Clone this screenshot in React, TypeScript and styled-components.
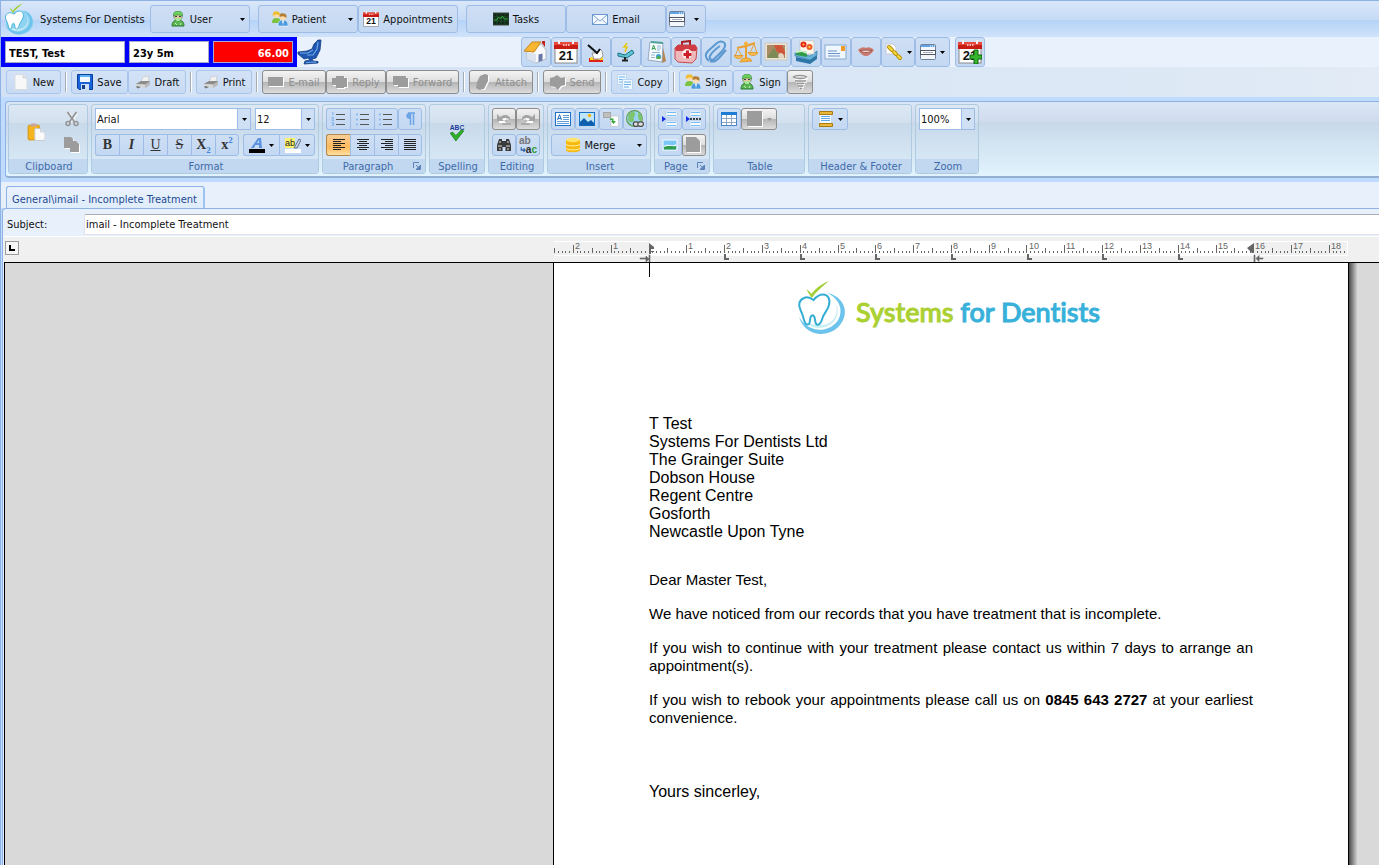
import React from "react";
import styled, { createGlobalStyle, css } from "styled-components";

const UI_FONT = '"DejaVu Sans Condensed", "Noto Sans", sans-serif';
const DOC_FONT = '"Liberation Sans", Arial, sans-serif';

const Global = createGlobalStyle`
  *, *::before, *::after { box-sizing: border-box; }
  html, body { margin: 0; height: 100%; }
  body { background: #d9d9d9; font: 11px/15px ${UI_FONT}; color: #111; overflow: hidden; }
  #root { height: 100%; }
  button, input, select { font: inherit; color: inherit; margin: 0; }
`;

/* ---------- Icons ---------- */

type IconProps = { size?: number; box?: number; children?: React.ReactNode };
const Svg = ({ size = 16, box = 16, children }: IconProps) => (
  <svg width={size} height={size} viewBox={`0 0 ${box} ${box}`} aria-hidden="true">
    {children}
  </svg>
);

const ToothMark = ({ size, solid }: { size: number; solid?: boolean }) => (
  <svg width={size} height={size} viewBox="0 0 50 54" aria-hidden="true">
    {solid && <ellipse cx="26" cy="33" rx="23" ry="20" fill="#8fd2f2" />}
    <path d="M30 12C42 14 50 24 47.500 35C44 48 33 53 23 53C13 52.500 5 46 2 36C8 46 18 50 27 48.500C38 46 44 38 43.500 29C43 21 37 15 30 12Z" fill="#6cc4ec" />
    <path d="M37 19C42 26 40 38 32 42C24 46 13 44 7 39C12 48 24 49 33 44C42 38 43 27 37 19Z" fill="#cdeff2" />
    <path
      d="M16.500 19C14 17 10 15.500 7 17C2 19 1 24 3.500 29C5 32 6 35 7 39C8 43 10 44.500 12 43C14 40 12 34.500 15.700 34.300C19 34.500 17 41 19.500 43.500C22 45 24.500 41 25.500 37C27 32 31 29 32 24C33.500 18 31 13.500 26 13.500C22 13.500 19 16 16.500 19Z"
      fill="#fff"
      stroke="#35aed6"
      strokeWidth={solid ? 1.5 : 2}
    />
    <path d="M9.500 8C12 10 13.500 11.500 14.500 13C18 8 24 3 31.500 .3C25 6 19 11 14.800 17C13 14 11 12 9.500 8Z" fill="#a3cf3a" />
  </svg>
);

const DoctorIcon = () => (
  <Svg>
    <path d="M2 15C2 11 4 9 8 9S14 11 14 15Z" fill="#5bb552" stroke="#2b7a2e" />
    <circle cx="8" cy="5.500" r="4.200" fill="#e9c39a" stroke="#3c7b3a" strokeWidth=".6" />
    <path d="M3.500 5C3 1 6 0 8 0S13 1 12.500 5C10 3.500 6 3.500 3.500 5Z" fill="#6fcf5e" stroke="#2c8030" strokeWidth=".6" />
    <path d="M5 5h2v1H5ZM9 5h2v1H9Z" fill="#345" />
    <path d="M4.500 7h7L9.500 10h-3Z" fill="#a6e898" />
    <path d="M5 12l2 2M11 12l-1 2" stroke="#c9f4ba" />
  </Svg>
);

const PeopleIcon = () => (
  <Svg>
    <path d="M0 12C0 8 2 7 4.500 7S9 8 9 12Z" fill="#7cc242" />
    <circle cx="4.500" cy="4.500" r="2.800" fill="#fbdcb0" />
    <path d="M1 5C0 1 3 0 4.500 .5C7 0 8.500 2 7.800 5C6 3 3 3 1 5Z" fill="#f0bd2a" />
    <path d="M6 15C6 10 8 9 11 9S16 10 16 15Z" fill="#4b9be0" stroke="#fff" strokeWidth=".5" />
    <circle cx="11" cy="6.500" r="3" fill="#fbdcb0" />
    <path d="M7.800 6C7 2 10 2 11 2.500C14 2 15 4 14.300 7C12 5 10 5 7.800 6Z" fill="#b57d31" />
    <path d="M10 9.500L11 14L12 9.500Z" fill="#fff" />
  </Svg>
);

const CalendarIcon = ({ size = 16, plus }: { size?: number; plus?: boolean }) => (
  <Svg size={size} box={24}>
    <rect x="1" y="3" width="22" height="20" fill="#fff" stroke="#8a8a8a" />
    <rect x="0" y="2" width="24" height="4" fill="#e8493c" />
    <rect x="0" y="5" width="24" height="4" fill="#c81d14" />
    <path d="M5 0v4M19 0v4" stroke="#f0f0f0" strokeWidth="2" />
    <path d="M9 5h1.500M11.500 5h1.500M14 5h1.500" stroke="#ffb9b2" strokeWidth="2" />
    <text x="12" y="20" fontSize="13" fontWeight="700" fontFamily="Liberation Sans" textAnchor="middle" fill="#111">
      21
    </text>
    {plus && <path d="M16 10h4v5h4v4h-4v5h-4v-5h-4v-4h4Z" fill="#35b52b" stroke="#116315" />}
  </Svg>
);

const TasksIcon = () => (
  <Svg>
    <rect x="0" y="2" width="16" height="12" fill="#15261a" stroke="#3a4a3c" />
    <path d="M1 6h14M1 10h14M4 3v10M8 3v10M12 3v10" stroke="#1d5a2c" strokeWidth=".7" />
    <path d="M1 9h3l1.500-3 2 2 2-3 1.500 3h4" fill="none" stroke="#2fa83a" />
  </Svg>
);

const MailIcon = () => (
  <Svg>
    <rect x=".5" y="3.500" width="15" height="10" fill="#f4f9ff" stroke="#6d97cf" />
    <path d="M1 4l7 6 7-6M1 13l5-4.500M15 13l-5-4.500" fill="none" stroke="#7fa6d8" />
  </Svg>
);

const WindowIcon = () => (
  <Svg>
    <rect x=".5" y=".5" width="15" height="15" rx="1" fill="#f3f7fc" stroke="#6f8099" />
    <rect x="1" y="1" width="14" height="2" fill="#5fa4e8" />
    <path d="M10 2h1M12 2h1M14 2h1" stroke="#fff" />
    <rect x=".5" y="6.500" width="15" height="4" fill="#fff" stroke="#4d5566" />
    <path d="M3 8.500h10" stroke="#a2aaba" />
  </Svg>
);

const ChairIcon = () => (
  <Svg size={26} box={26}>
    <path d="M17 5L21 1H24L23 11 19 19 15 20 16 22 21 22.500V24L7 25 8 22 13 21 11 19 7 20 1 15V13L10 12 15 10Z" fill="#1f57b0" stroke="#123b7c" strokeWidth=".8" />
    <path d="M21 3l-1 7-4 6-6 0M3 14l8 0 5-3M9 23.500l10-.5" stroke="#6fa6e8" fill="none" strokeWidth="1.200" />
  </Svg>
);

const HomeIcon = () => (
  <Svg size={24} box={24}>
    <path d="M18 1h3v9h-3Z" fill="#c3221c" />
    <path d="M3 11v8l9 4 10-4v-9l-5-6Z" fill="#f8fafc" stroke="#a2aebd" strokeWidth=".8" />
    <path d="M3 12l9 2v9l-9-4Z" fill="#dbe3ee" />
    <path d="M8 2h9L10 12 0 11Z" fill="#f7b733" stroke="#c9861c" />
    <path d="M17 3l6 8" stroke="#c9ced6" strokeWidth="1.500" />
    <path d="M14.500 14.500l4-1v7l-4 1.500Z" fill="#6a76a8" />
  </Svg>
);

const ProbeIcon = () => (
  <Svg size={24} box={24}>
    <path d="M5 18h14v4H5Z" fill="#e02216" />
    <path d="M6 18c2-2 3-1 3 1 3 1 5 1 6 0 0-3 2-3 4-1v2H6Z" fill="#ffd71a" />
    <path d="M8 13l4 0 4-4 2 2 1 5-3 3h-6Z" fill="#fff" stroke="#999" />
    <path d="M4 5l9 8 3-4" fill="none" stroke="#111" strokeWidth="2" />
  </Svg>
);

const ScalerIcon = () => (
  <Svg size={24} box={24}>
    <path d="M13 3l-3 4h3l-2 5" stroke="#e9c60c" strokeWidth="1.500" fill="none" />
    <path d="M4 13l7 2 7-5 2 3-7 5-9-2Z" fill="#5cc7d4" stroke="#1c6f86" />
    <path d="M11 17v3M8 20.500h6" stroke="#222" strokeWidth="2" />
  </Svg>
);

const NotesIcon = () => (
  <Svg size={24} box={24}>
    <path d="M18 3l4 18-4 2Z" fill="#b9834c" />
    <path d="M6 2l13 1-1 19-14-2Z" fill="#f7fbff" stroke="#94a8c0" />
    <path d="M7 1l12 1v2L7 3Z" fill="#4f9f9a" />
    <path d="M8 10l1.500-5L11.500 10M8 8.500h3" stroke="#36a04a" fill="none" />
    <path d="M8 12.500h8M7 15h4M7 17.500h4M13 6h4M13 8h4M13 10h3" stroke="#8fb8d6" />
    <circle cx="14.500" cy="16.500" r="2.500" fill="#3f9fd4" />
    <path d="M12.500 17.500c1-2 3-2 4 0v1.500h-4Z" fill="#4fb04a" />
  </Svg>
);

const FirstAidIcon = () => (
  <Svg size={24} box={24}>
    <path d="M8 6V2l8-1v4" fill="none" stroke="#a61c22" strokeWidth="2" />
    <path d="M1 8l3-3h17l2 3-1 11-4 4-14-1-3-3Z" fill="#f0b9b9" stroke="#c24a50" />
    <path d="M1 8l3-3h17l2 3-1 3H2Z" fill="#cf3c43" />
    <circle cx="13" cy="14" r="5" fill="#fdeeee" />
    <path d="M12 10.500h3v2.500h2.500v3H15v2.500h-3V16H9.500v-3H12Z" fill="#cf1e25" />
  </Svg>
);

const ClipIcon = () => (
  <Svg size={24} box={24}>
    <path
      d="M5 21C1 18 1 14 4 11L13 3c4-3 9-1 8 3-1 5-7 9-11 13-3 2-5 0-4-3 2-4 7-8 10-10M6 21c4 2 7-1 9-3l7-8"
      fill="none"
      stroke="#5b98cf"
      strokeWidth="2"
    />
    <path d="M5 14l9-9c3-3 6-1 5 1" fill="none" stroke="#b7d9f3" />
  </Svg>
);

const ScalesIcon = () => (
  <Svg size={24} box={24}>
    <path d="M12 2v17M3 8l9-2 9-3" fill="none" stroke="#eaa02c" strokeWidth="2" />
    <path d="M6 22c1-3 3-4 6-4s5 1 6 3Z" fill="#f5b544" stroke="#dd8f1c" strokeWidth=".8" />
    <path d="M4 9L1 16M4 9l4 7M20 4l-4 9M20 4l3 9" stroke="#e6a33c" fill="none" />
    <path d="M0 15.500h9c-1 4-8 4-9 0ZM14 12.500h10c-1 4-9 4-10 0Z" fill="#f8bc4e" stroke="#d98b1b" strokeWidth=".7" />
    <circle cx="12" cy="3.500" r="2" fill="#f5b33b" />
  </Svg>
);

const PhotoIcon = () => (
  <Svg size={24} box={24}>
    <rect x="1" y="3" width="22" height="17" fill="#e9e4d8" stroke="#cfcabc" />
    <rect x="3" y="5" width="18" height="13" fill="#a88a63" />
    <path d="M10 5h8l3 7v3l-8-3Z" fill="#cf5638" />
    <path d="M4 16l6-8 5 8v2H4Z" fill="#7d8a55" />
    <path d="M14 16c1-4 5-4 6 0v2h-5Z" fill="#e3d3c2" />
  </Svg>
);

const AlbumIcon = () => (
  <Svg size={24} box={24}>
    <path d="M2 17l14 3 7-5v4l-7 5-14-3Z" fill="#2c77a8" />
    <path d="M1 13l15 3 7-5v4l-7 5-15-4Z" fill="#67b4dc" stroke="#276b99" strokeWidth=".6" />
    <path d="M6 0l14 1v13H6Z" fill="#fff8ec" stroke="#bbb" strokeWidth=".6" />
    <circle cx="9.500" cy="4.500" r="3" fill="#e3271d" />
    <circle cx="15.500" cy="7" r="3" fill="#ef5d2a" />
    <circle cx="9.500" cy="4.500" r="1" fill="#ffd83c" />
    <circle cx="15.500" cy="7" r="1" fill="#ffd83c" />
    <path d="M2 10l11 1v5L2 14Z" fill="#c9ecc6" />
    <path d="M2 13l6-1 5 2v3L2 15Z" fill="#2f9a48" />
  </Svg>
);

const PostcardIcon = () => (
  <Svg size={24} box={24}>
    <rect x="1" y="5" width="21" height="14" fill="#eef7ff" stroke="#88a9d0" />
    <path d="M4 11h9M4 13.500h12M4 16h12" stroke="#6c8fc4" />
    <rect x="17" y="6" width="4" height="5" fill="#f09a2c" />
  </Svg>
);

const LipsIcon = () => (
  <Svg size={18} box={18}>
    <path d="M1 7C4 4 7 3.500 9 5C11 3.500 14 4 17 7C14 11 12 13 9 13S4 11 1 7Z" fill="#cc7a70" />
    <path d="M3 7.500c4-.5 8-.5 12 0-3 2-4 2-6 2S6 9.500 3 7.500Z" fill="#f3d9d6" stroke="#8f4a44" strokeWidth=".8" />
  </Svg>
);

const LinkIcon = () => (
  <Svg size={18} box={18}>
    <path d="M1 1h7l3 3v7H1Z" fill="#fbfcfe" stroke="#c9c9d6" />
    <g fill="none" stroke="#b8900c" strokeWidth="4" strokeLinecap="round">
      <path d="M4 4l3 3M9 9l2 2M13 13l2 2" />
    </g>
    <g fill="none" stroke="#f8dc3a" strokeWidth="2" strokeLinecap="round">
      <path d="M4 4l3 3M9 9l2 2M13 13l2 2" />
    </g>
  </Svg>
);

const PageIcon = () => (
  <Svg>
    <path d="M2 .5h8L14 4v11.500H2Z" fill="#f8f8f8" stroke="#d8dbe0" />
    <path d="M10 .5V4h4" fill="#e2e4e8" stroke="#d0d3d8" />
  </Svg>
);

const SaveIcon = () => (
  <Svg>
    <path d="M.5 .5h15v15H2l-1.500-1.500Z" fill="#1a63d8" stroke="#0c3f9b" />
    <path d="M3 1h10v7H3Z" fill="#f2f8ff" />
    <path d="M3 1h10v2H3Z" fill="#5cb6f2" />
    <path d="M4 10h8v6H4Z" fill="#cfe0f4" />
    <path d="M5 11h3v4H5Z" fill="#163d86" />
  </Svg>
);

const PrinterIcon = () => (
  <Svg>
    <path d="M8 3l6-1-1 6H6Z" fill="#f2f2f2" stroke="#c2c2c2" strokeWidth=".6" />
    <path d="M1 10l5-3h9v4l-5 3Z" fill="#b8b8b8" />
    <path d="M1 10l5-3h9l-5 3.500Z" fill="#8b8b8b" />
    <path d="M1 10l9 .5V14L1 12Z" fill="#d6d6d6" />
    <path d="M2 12l4 1-3 1.500-2-1.500Z" fill="#777" />
  </Svg>
);

const GreyShape = ({ d }: { d: string }) => (
  <Svg>
    <path d={d} transform="translate(1 1)" fill="#fff" />
    <path d={d} fill="#9c9c9c" />
  </Svg>
);

const CopyIcon = () => (
  <Svg>
    <path d="M.5 .5h9v10h-9Z" fill="#eff7fe" stroke="#b7d6f1" />
    <path d="M2 3h6M2 5.500h6M2 8h4" stroke="#6fb1ea" />
    <path d="M5.500 5.500h10v10h-10Z" fill="#eff7fe" stroke="#b7d6f1" />
    <path d="M7 8h7M7 10.500h7M7 13h5" stroke="#6fb1ea" />
  </Svg>
);

const TornadoIcon = () => (
  <Svg>
    <path d="M1 3c3-2 11-2 14 0M1 3c3 3 11 3 14 0M3 7h11M5 9.500h7M6 12h5M8 14.500h2" stroke="#fff" strokeWidth="1.500" fill="none" transform="translate(1 1)" />
    <path d="M1 3c3-2 11-2 14 0M1 3c3 2 11 2 14 0M3 7h11M5 9.500h7M6 12h5M8 14.500h2" stroke="#969696" strokeWidth="1.500" fill="none" />
  </Svg>
);

const PasteIcon = () => (
  <Svg size={18}>
    <rect x="1" y="2" width="10" height="13" rx="1" fill="#f5b51f" stroke="#d48c08" strokeWidth=".8" />
    <path d="M3 3C3 1 4 .5 6 .5S9 1 9 3Z" fill="#cda49c" />
    <path d="M7 5h5l4 3v7.500H7Z" fill="#fafafa" stroke="#c4cad2" strokeWidth=".8" />
    <path d="M12 5v3h4" fill="#dfe3e8" stroke="#c4cad2" strokeWidth=".6" />
  </Svg>
);

const CutIcon = () => (
  <Svg>
    <path d="M4 1l6 9M12 1L6 10" stroke="#fff" strokeWidth="2" transform="translate(1 1)" />
    <path d="M3.500 1l7 10M12.500 1l-7 10" stroke="#949494" strokeWidth="1.800" />
    <circle cx="4" cy="12.500" r="2" fill="none" stroke="#949494" strokeWidth="1.500" />
    <circle cx="12" cy="12.500" r="2" fill="none" stroke="#949494" strokeWidth="1.500" />
  </Svg>
);

const ListIcon = ({ numbered }: { numbered?: boolean }) => (
  <Svg>
    <path d="M5 3.500h9M5 8.500h9M5 13.500h9" stroke="#555" />
    {numbered ? (
      <path d="M1 1.500h1v3M.5 6.500h2v1.500h-1.500v1.500h2M.5 11.500h2v3h-2M1 13h1.500" fill="none" stroke="#7fb0ea" strokeWidth=".9" />
    ) : (
      <path d="M1 2.500h2v2H1ZM1 7.500h2v2H1ZM1 12.500h2v2H1Z" fill="#8fbcf0" />
    )}
  </Svg>
);

const AlignIcon = ({ kind }: { kind: "left" | "center" | "right" | "full" }) => {
  const short = { left: "M2 4.500h8", center: "M4 4.500h8", right: "M6 4.500h8", full: "M2 4.500h12" }[kind];
  const low = short.replace("4.500", "8.500");
  const last = short.replace("4.500", "12.500");
  return (
    <Svg>
      <path d={`M2 2.500h12M2 6.500h12M2 10.500h12${short}${low}${last}`} stroke="#222" />
    </Svg>
  );
};

const PilcrowIcon = () => (
  <Svg>
    <path d="M6 2h7M8.500 2v12M11.500 2v12" stroke="#6da4e6" strokeWidth="1.500" />
    <path d="M8 2C3 1 3 8 8 8Z" fill="#6da4e6" />
  </Svg>
);

const SpellIcon = () => (
  <Svg size={18}>
    <text x="8" y="6" fontSize="6" fontWeight="700" fontFamily="Liberation Sans" textAnchor="middle" fill="#1f3d9b">
      ABC
    </text>
    <path d="M2 9l2-1 3 3 5-5 2 1-7 9Z" fill="#2fae2a" stroke="#14761a" strokeWidth=".6" />
  </Svg>
);

const ArrowBack = ({ flip }: { flip?: boolean }) => (
  <Svg>
    <g transform={flip ? "translate(16 0) scale(-1 1)" : undefined}>
      <path d="M2 4v7h7L7 8.500c3-2 5-1 6 1 1-4-4-7-8-3Z" fill="#fff" transform="translate(1 1)" />
      <path d="M1 3v7h7L6 8c3-2 6-1 8 2 1-6-5-8-10-4Z" fill="#a3a3a3" />
      <path d="M6 13h9" stroke="#a3a3a3" strokeWidth="1.500" />
    </g>
  </Svg>
);

const BinocularsIcon = () => (
  <Svg>
    <path d="M3 2h3v2h4V2h3l2 6v6H9.500v-4h-3v4H1V8Z" fill="#3b3b3b" />
    <path d="M2 9h4M10 9h4M3 5h2M11 5h2M3 12h2M11 12h2" stroke="#e2e2e2" strokeWidth="1.200" />
  </Svg>
);

const ReplaceIcon = () => (
  <Svg size={18} box={16}>
    <text x="0" y="7" fontSize="9" fontWeight="700" fontFamily="Liberation Sans" fill="#777">
      ab
    </text>
    <text x="6" y="15" fontSize="9" fontWeight="700" fontFamily="Liberation Sans" fill="#2b2b2b">
      a<tspan fill="#2c9e36">c</tspan>
    </text>
    <path d="M2 10v2.500h3M4 11l1.500 1.500L4 14" fill="none" stroke="#2b5f9e" />
  </Svg>
);

const TextBoxIcon = () => (
  <Svg>
    <rect x=".5" y="1.500" width="15" height="13" fill="#fff" stroke="#1f6fc4" />
    <path d="M2.500 9l2-5.500L6.500 9M3 7.500h3" fill="none" stroke="#1f6fc4" />
    <path d="M8 4.500h6M8 6.500h6M8 8.500h6M2 10.500h12M2 12.500h12" stroke="#5c9bd9" />
  </Svg>
);

const PictureIcon = () => (
  <Svg>
    <rect x=".5" y="1.500" width="15" height="13" fill="#bfe6fb" stroke="#1574c9" />
    <path d="M1 11l4-4 4 4 3-2 3 3v2.500H1Z" fill="#0f5fae" />
    <circle cx="10.500" cy="4.500" r="1.800" fill="#f7b51c" />
  </Svg>
);

const InsertFileIcon = () => (
  <Svg>
    <rect x="0" y="1" width="8" height="6" fill="#a6a6a6" />
    <path d="M1 3h6M1 5h6" stroke="#d8d8d8" />
    <rect x="8" y="5" width="7.500" height="10.500" fill="#fff" stroke="#bbb" strokeWidth=".6" />
    <path d="M7 7.500h3.500V10H13L10.500 13 8 10H9V9H7Z" fill="#35a93a" />
  </Svg>
);

const GlobeLinkIcon = () => (
  <Svg size={18} box={16}>
    <circle cx="7.500" cy="7.500" r="7" fill="#9ad3f2" stroke="#5d9a4e" />
    <path d="M2 4c3-3 5-3 6-1s-2 3-1 5-3 5-5 1ZM11 2c3 2 4 5 3 8-3 0-4-4-3-8Z" fill="#7cc46e" />
    <rect x="6.500" y="10.500" width="5" height="4" rx="2" fill="#ddd" stroke="#4a4a4a" />
    <rect x="10.500" y="10.500" width="5" height="4" rx="2" fill="#ddd" stroke="#4a4a4a" />
  </Svg>
);

const DatabaseIcon = () => (
  <Svg>
    <path d="M1 3v10c0 3 14 3 14 0V3Z" fill="#f6b90f" />
    <ellipse cx="8" cy="3" rx="7" ry="2.200" fill="#ffe36b" />
    <path d="M1 7c0 2.500 14 2.500 14 0M1 11c0 2.500 14 2.500 14 0" fill="none" stroke="#fff0a8" />
  </Svg>
);

const PageBreakIcon = ({ dotted }: { dotted?: boolean }) => (
  <Svg>
    <path d="M0 5v6l4-3Z" fill="#1330e8" />
    <path d="M4 0h11v6H4ZM4 10h11v6H4Z" fill="#f8fcff" stroke="#a7c7e6" strokeWidth=".6" />
    <path d="M5 1.500h9M5 4.500h9M5 11.500h9M5 14.500h9" stroke="#79bdf0" />
    {dotted && <path d="M4 8h12" stroke="#111" strokeWidth="1.500" strokeDasharray="2 1" />}
  </Svg>
);

const LandscapeIcon = () => (
  <Svg>
    <rect x="1" y="3" width="14" height="10" fill="#7cc6f5" stroke="#f6fbff" />
    <path d="M2 9c4-3 8 1 12-2v3H2Z" fill="#eaf6ff" />
    <path d="M2 10c4-2 8 0 12-1v3.500H2Z" fill="#2f9d4d" />
  </Svg>
);

const TableIcon = () => (
  <Svg>
    <rect x=".5" y="1.500" width="15" height="13" fill="#fff" stroke="#4d86c8" />
    <rect x="0" y="1" width="16" height="3" fill="#1e7ad2" />
    <path d="M1 7.500h14M1 11.500h14M5.500 4v10M10.500 4v10" stroke="#8fa6c0" />
  </Svg>
);

const HeaderIcon = () => (
  <Svg>
    <rect x="2" y="2" width="11" height="12" fill="#f3f9ff" />
    <path d="M3 5.500h9M3 7.500h9M3 9.500h9" stroke="#5fa9ea" />
    <path d="M1.500 .5h13v3h-13ZM1.500 12.500h13v3h-13Z" fill="#e9b73a" stroke="#a97a12" />
  </Svg>
);

const FontColorIcon = () => (
  <Svg>
    <path d="M2 11L9 1h3l1 10h-3V8H6.500L5 11ZM8 6h2V3Z" fill="#5b93e0" />
    <rect x="0" y="12" width="16" height="4" fill="#000" />
  </Svg>
);

const HighlightIcon = () => (
  <Svg>
    <rect x="0" y="1" width="10" height="10" fill="#fbf36b" />
    <text x="0" y="9" fontSize="9" fontFamily="Liberation Sans" fill="#222">
      ab
    </text>
    <path d="M9 11l5-9 2 1-4 8Z" fill="#c6d3e6" stroke="#4e5d74" strokeWidth=".8" />
    <rect x="0" y="12" width="16" height="4" fill="#fff" />
  </Svg>
);

const LaunchIcon = () => (
  <svg width="8" height="8" viewBox="0 0 8 8" aria-hidden="true">
    <path d="M.5 6V.5H6" fill="none" stroke="#5c82b8" />
    <path d="M3 3l3 3" stroke="#5c82b8" />
    <path d="M7.500 3v4.500H3" fill="none" stroke="#5c82b8" />
    <path d="M3 7l4-4v4Z" fill="#5c82b8" />
  </svg>
);

const Caret = ({ grey }: { grey?: boolean }) => (
  <svg width="5" height="3" viewBox="0 0 5 3" aria-hidden="true">
    <path d="M0 0h5L2.500 3Z" fill={grey ? "#999" : "#000"} />
  </svg>
);

/* ---------- Window chrome ---------- */

const Window = styled.main`
  display: flex;
  flex-direction: column;
  height: 100%;
  border-left: 1px solid #8db2e3;
  background: #bfdbff;
`;

const TopBar = styled.header`
  display: flex;
  align-items: center;
  flex: none;
  height: 37px;
  padding-left: 2px;
  border-top: 1px solid #8db2e3;
  background: linear-gradient(#d9e7f9 0, #c6daf6 19px, #b5d3f7 19px, #cfe2fa 100%);
`;

const Brand = styled.div`
  display: flex;
  align-items: center;
  gap: 5px;
  width: 147px;
`;

const Cluster = styled.div<{ $after?: number }>`
  display: flex;
  margin-right: ${(p) => p.$after ?? 0}px;
`;

const disabledLook = css`
  border-color: #8d8d8d;
  background: linear-gradient(#f4f4f4 0, #dedede 48%, #b4b4b4 50%, #dcdcdc 100%);
  color: #8f8f8f;
`;

const buttonBase = css`
  display: flex;
  align-items: center;
  justify-content: center;
  flex: none;
  padding: 0;
  border: 1px solid #9dbde6;
  border-radius: 3px;
  background: linear-gradient(#cfdff4, #c3d8f3);
  white-space: nowrap;
  svg { flex: none; }
`;

const NavButton = styled.button<{ $w: number }>`
  ${buttonBase}
  width: ${(p) => p.$w}px;
  height: 28px;
  gap: 4px;
`;

const NavLabel = styled.span`
  display: flex;
  align-items: center;
  justify-content: center;
  gap: 4px;
  flex: 1;
`;

const DropZone = styled.span`
  display: flex;
  align-items: center;
  justify-content: center;
  width: 14px;
`;

const PatientBar = styled.section`
  display: flex;
  align-items: center;
  flex: none;
  height: 30px;
  background: #e8f1fc;
`;

const PatientFields = styled.div`
  display: flex;
  gap: 4px;
  height: 30px;
  padding: 4px;
  background: #0000ff;
`;

const PatientInput = styled.input<{ $w: number; $alert?: boolean }>`
  width: ${(p) => p.$w}px;
  height: 22px;
  padding: 2px 3px 0;
  border: 1px solid #a9a9c8;
  border-radius: 0;
  outline: 0;
  font-weight: 700;
  background: ${(p) => (p.$alert ? "#ff0000" : "#fff")};
  color: ${(p) => (p.$alert ? "#fff" : "#000")};
  text-align: ${(p) => (p.$alert ? "right" : "left")};
`;

const ChairSlot = styled.div`
  display: flex;
  width: 224px;
`;

const ToolButton = styled.button<{ $w?: number }>`
  ${buttonBase}
  width: ${(p) => p.$w ?? 30}px;
  height: 30px;
  gap: 4px;
`;

const ActionBar = styled.section`
  display: flex;
  align-items: center;
  flex: none;
  height: 30px;
  padding-left: 5px;
  background: linear-gradient(90deg, #d2e1f5, #dce8f5 80%, #e2ebf6);
`;

const ActionButton = styled.button<{ $w: number }>`
  ${buttonBase}
  width: ${(p) => p.$w}px;
  height: 24px;
  gap: 4px;
  border-color: #a8c6ec;
  background: linear-gradient(#d3e2f6, #c8dbf3);
  &:disabled { ${disabledLook} }
`;

const Divider = styled.span`
  width: 2px;
  height: 20px;
  margin: 0 4px;
  border-left: 1px solid #a3abb5;
  border-right: 1px solid #fff;
`;

/* ---------- Ribbon ---------- */

const Ribbon = styled.section`
  display: flex;
  gap: 3px;
  flex: none;
  height: 77px;
  margin: 4px 0 4px 4px;
  padding: 2px 0 0 2px;
  border: 1px solid #8db2e3;
  border-right: 0;
  border-bottom: 2px solid #92afd0;
  border-radius: 4px 0 0 4px;
  background: linear-gradient(#dbe6f5 0, #cfdcee 20px, #c8d8ea 20px, #e1f3fd 100%);
`;

const GroupBox = styled.section<{ $w: number }>`
  display: flex;
  flex-direction: column;
  flex: none;
  width: ${(p) => p.$w}px;
  height: 70px;
  border: 1px solid #afcbdf;
  border-radius: 3px;
  background: linear-gradient(#dde8f4 0, #d2dfee 18px, #c8d9ea 18px, #dcecf9 100%);
`;

const GroupBody = styled.div`
  display: flex;
  flex-direction: column;
  flex: 1;
  gap: 4px;
  min-height: 0;
  padding: 3px;
`;

const GroupTitle = styled.h2<{ $launch?: boolean }>`
  display: flex;
  align-items: center;
  flex: none;
  height: 14px;
  margin: 0;
  padding: ${(p) => (p.$launch ? "0 4px 0 0" : "0 0 0 2px")};
  background: #c1d8f0;
  color: #3e6aaa;
  font-size: 11px;
  font-weight: 400;
  line-height: 15px;
  span { flex: 1; text-align: center; white-space: nowrap; }
`;

const LaunchButton = styled.button`
  display: flex;
  padding: 0;
  border: 0;
  background: none;
`;

const Line = styled.div<{ $gap?: number }>`
  display: flex;
  flex: none;
  gap: ${(p) => p.$gap ?? 0}px;
  height: 22px;
`;

const RibbonButton = styled.button<{ $w?: number; $on?: boolean }>`
  ${buttonBase}
  width: ${(p) => p.$w ?? 24}px;
  height: 22px;
  gap: 4px;
  ${(p) =>
    p.$on &&
    css`
      border-color: #b08850;
      background: linear-gradient(#f9cf96, #fdb95c 60%, #fee0a0);
    `}
  &:disabled { ${disabledLook} }
`;

const Segments = styled.div`
  display: flex;
  ${RibbonButton} { border-radius: 0; }
  ${RibbonButton}:not(:last-child) { border-right-width: 0; }
  ${RibbonButton}:first-child { border-radius: 3px 0 0 3px; }
  ${RibbonButton}:last-child { border-radius: 0 3px 3px 0; }
`;

const Glyph = styled.span<{ $italic?: boolean; $line?: string; $light?: boolean }>`
  font: ${(p) => (p.$italic ? "italic " : "")}${(p) => (p.$light ? 400 : 700)} 14px/18px "Liberation Serif", serif;
  text-decoration: ${(p) => p.$line ?? "none"};
  color: #333;
  sub, sup { font-size: 9px; line-height: 0; color: #3f86dc; }
`;

const PlainButton = styled.button`
  display: flex;
  align-items: center;
  justify-content: center;
  padding: 0;
  border: 0;
  background: none;
`;

const ClipboardGrid = styled.div`
  display: grid;
  grid-template-columns: 1fr 24px;
  grid-template-rows: 22px 22px;
  row-gap: 4px;
  ${PlainButton}:first-child { grid-row: span 2; }
`;

const Centered = styled.div`
  display: flex;
  flex: 1;
  align-items: center;
  justify-content: center;
`;

const ComboBox = styled.label<{ $w: number }>`
  display: grid;
  grid-template-columns: 1fr 13px;
  width: ${(p) => p.$w}px;
  height: 22px;
  border: 1px solid #9dbde6;
  background: #fff;
`;

const ComboSelect = styled.select`
  grid-area: 1 / 1 / 2 / 3;
  appearance: none;
  width: 100%;
  padding: 1px 1px 0;
  border: 0;
  border-radius: 0;
  outline: 0;
  background: none;
`;

const ComboArrow = styled.span`
  grid-area: 1 / 2;
  display: flex;
  align-items: center;
  justify-content: center;
  border-left: 1px solid #9dbde6;
  background: #cfe0f5;
  pointer-events: none;
`;

const Combo = ({ w, label, value }: { w: number; label: string; value: string }) => (
  <ComboBox $w={w}>
    <ComboSelect aria-label={label} defaultValue={value}>
      <option>{value}</option>
    </ComboSelect>
    <ComboArrow>
      <Caret />
    </ComboArrow>
  </ComboBox>
);

const Group = ({ w, title, launch, children }: { w: number; title: string; launch?: boolean; children: React.ReactNode }) => (
  <GroupBox $w={w}>
    <GroupBody>{children}</GroupBody>
    <GroupTitle $launch={launch}>
      <span>{title}</span>
      {launch && (
        <LaunchButton aria-label={`${title} settings`}>
          <LaunchIcon />
        </LaunchButton>
      )}
    </GroupTitle>
  </GroupBox>
);

/* ---------- Document ---------- */

const TabStrip = styled.nav`
  display: flex;
  align-items: flex-end;
  flex: none;
  height: 26px;
  padding-left: 5px;
  background: #e8f0fb;
`;

const DocTab = styled.button`
  height: 22px;
  padding: 3px 6px 0 5px;
  border: 1px solid #8db2e3;
  border-right: 2px solid #9cc4ee;
  border-bottom: 0;
  border-radius: 3px 3px 0 0;
  background: linear-gradient(#eaf3fd, #dfecfb);
  color: #1f4a94;
  white-space: nowrap;
`;

const Editor = styled.section`
  display: flex;
  flex-direction: column;
  flex: 1;
  min-height: 0;
  margin-left: 1px;
  border-top: 1px solid #8db2e3;
  border-left: 1px solid #8db2e3;
  border-top-left-radius: 4px;
  background: #e8f0fb;
`;

const SubjectRow = styled.div`
  display: flex;
  align-items: center;
  flex: none;
  height: 28px;
  padding: 3px 0 0 4px;
  border-bottom: 1px solid #fff;
  label { width: 77px; }
`;

const SubjectInput = styled.input`
  flex: 1;
  height: 21px;
  padding: 0 1px;
  border: 1px solid #e2e3ea;
  border-top-color: #abadb3;
  border-right: 0;
  border-radius: 2px 0 0 2px;
  outline: 0;
  background: #fff;
`;

const RulerRow = styled.div`
  display: flex;
  flex: none;
  height: 25px;
  padding-left: 2px;
  background: #f0f0f0;
`;

const TabStopSlot = styled.div`
  width: 549px;
  padding-top: 4px;
`;

const TabStopButton = styled.button`
  display: flex;
  align-items: center;
  justify-content: center;
  width: 14px;
  height: 14px;
  padding: 0;
  border: 1px solid #9c9c9c;
  background: #f6f6f6;
`;

const Canvas = styled.div`
  display: flex;
  flex: 1;
  min-height: 0;
  margin-left: 1px;
  padding-left: 548px;
  overflow: hidden;
  border-top: 1px solid #000;
  border-left: 1px solid #000;
  background: #d9d9d9;
`;

const Sheet = styled.article`
  flex: none;
  width: 796px;
  min-height: 1123px;
  padding: 0 95px;
  border-left: 1px solid #000;
  border-right: 1px solid #000;
  background: #fff;
  font: 15px/18px ${DOC_FONT};
  color: #000;
  p { margin: 0 0 16px; text-align: justify; }
`;

const SheetShadow = styled.div`
  width: 8px;
  min-height: 1123px;
  background: linear-gradient(90deg, #4a4a4a, #d0d0d0);
`;

const TextCaret = styled.div`
  width: 1px;
  height: 14px;
  background: #000;
`;

const Letterhead = styled.div`
  display: flex;
  align-items: center;
  gap: 7px;
  padding: 4px 0 0 146px;
  margin-bottom: 80px;
  font: 500 27px/36px Lato, sans-serif;
  font-variant-ligatures: none;
  white-space: nowrap;
`;

const LogoText = styled.div`
  padding-top: 8px;
`;

const LogoWord = styled.span<{ $color: string }>`
  color: ${(p) => p.$color};
  -webkit-text-stroke: 1px ${(p) => p.$color};
`;

const Address = styled.address`
  margin-bottom: 30px;
  font: normal 16px/18px ${DOC_FONT};
  div { white-space: nowrap; }
`;

const SignOff = styled.p`
  && { margin-top: 56px; font-size: 16px; }
`;

const UNIT = 37.8;
const ORIGIN = 95;

const Ruler = () => {
  const ticks = [];
  for (let i = -25; i <= 184; i++) {
    const x = Math.floor(ORIGIN + (i * UNIT) / 10);
    const h = i % 10 === 0 ? 8 : i % 5 === 0 ? 5 : 2;
    if (i !== 0 && i !== 160) ticks.push(<rect key={i} x={x} y={16 - h} width="1" height={h} fill="#666" />);
  }
  const labels = [-2, -1, 1, 2, 3, 4, 5, 6, 7, 8, 9, 10, 11, 12, 13, 14, 15, 16, 17, 18];
  return (
    <svg width="794" height="25" viewBox="0 0 794 25" role="img" aria-label="Ruler">
      <rect x="0" y="4" width="794" height="15" fill="#fff" />
      <rect x="0" y="5" width="95" height="13" fill="#f0f0f0" />
      <rect x="700" y="5" width="93" height="13" fill="#f0f0f0" />
      {ticks}
      {labels.map((n) => (
        <text key={n} x={Math.floor(ORIGIN + n * UNIT) + 2} y="12" fontSize="9" fontFamily="Liberation Sans" fill="#666">
          {Math.abs(n)}
        </text>
      ))}
      {[2, 4, 6, 8, 10, 12, 14].map((n) => (
        <path key={n} d={`M${Math.floor(ORIGIN + n * UNIT) + 1} 17v5h4`} fill="none" stroke="#666" strokeWidth="2" />
      ))}
      <path d="M95 6l5 4v2h-3v2h3v1h-3v2h-2ZM700 6l-7 5 5 5h2Z" fill="#666" />
      <path d="M86 21h7v1h-7ZM92 19l3 3-3 3ZM95 18h1v7h-1ZM700 18h1v7h-1ZM702 21.500l3-3v6ZM705 21h4v1h-4Z" fill="#666" stroke="#666" strokeWidth=".6" />
    </svg>
  );
};

const GREY_MAIL = "M0 3h15v9H0Z";
const GREY_REPLY = "M0 4h4V2h8v2h3v9h-3v1H4v-3H0Z";
const GREY_FORWARD = "M0 2h13v2h2v9H5v-2H0Z";
const GREY_CLIP = "M5 2l5-2 3 1v6l-4 8-5 1-3-2 1-6Z";
const GREY_SEND = "M0 4l4-1 3-2 4 3 4-1v8l-4 1-3 4-3-3-5-1Z";

export default function App() {
  return (
    <>
      <Global />
      <Window>
        <TopBar>
          <Brand>
            <ToothMark size={32} solid />
            Systems For Dentists
          </Brand>
          <Cluster $after={8}>
            <NavButton $w={100}>
              <NavLabel><DoctorIcon />User</NavLabel>
              <DropZone><Caret /></DropZone>
            </NavButton>
          </Cluster>
          <Cluster $after={8}>
            <NavButton $w={100}>
              <NavLabel><PeopleIcon />Patient</NavLabel>
              <DropZone><Caret /></DropZone>
            </NavButton>
            <NavButton $w={100}><CalendarIcon />Appointments</NavButton>
          </Cluster>
          <Cluster>
            <NavButton $w={100}><TasksIcon />Tasks</NavButton>
            <NavButton $w={100}><MailIcon />Email</NavButton>
            <NavButton $w={40} aria-label="Windows">
              <WindowIcon />
              <DropZone><Caret /></DropZone>
            </NavButton>
          </Cluster>
        </TopBar>

        <PatientBar>
          <PatientFields>
            <PatientInput $w={120} aria-label="Patient name" defaultValue="TEST, Test" />
            <PatientInput $w={80} aria-label="Age" defaultValue="23y 5m" />
            <PatientInput $w={80} $alert aria-label="Balance" defaultValue="66.00" />
          </PatientFields>
          <ChairSlot><ChairIcon /></ChairSlot>
          <Cluster $after={5}>
            <ToolButton aria-label="Home"><HomeIcon /></ToolButton>
            <ToolButton aria-label="Calendar"><CalendarIcon size={24} /></ToolButton>
            <ToolButton aria-label="Charting"><ProbeIcon /></ToolButton>
            <ToolButton aria-label="Perio"><ScalerIcon /></ToolButton>
            <ToolButton aria-label="Notes"><NotesIcon /></ToolButton>
            <ToolButton aria-label="Medical"><FirstAidIcon /></ToolButton>
            <ToolButton aria-label="Attachments"><ClipIcon /></ToolButton>
            <ToolButton aria-label="Balance"><ScalesIcon /></ToolButton>
            <ToolButton aria-label="Photo"><PhotoIcon /></ToolButton>
            <ToolButton aria-label="Album"><AlbumIcon /></ToolButton>
            <ToolButton aria-label="Postcard"><PostcardIcon /></ToolButton>
            <ToolButton aria-label="Smile"><LipsIcon /></ToolButton>
            <ToolButton $w={34} aria-label="Links"><LinkIcon /><Caret /></ToolButton>
            <ToolButton $w={35} aria-label="Views"><WindowIcon /><Caret /></ToolButton>
          </Cluster>
          <ToolButton aria-label="Add appointment"><CalendarIcon size={24} plus /></ToolButton>
        </PatientBar>

        <ActionBar>
          <ActionButton $w={55}><PageIcon />New</ActionButton>
          <Divider />
          <ActionButton $w={57}><SaveIcon />Save</ActionButton>
          <ActionButton $w={58}><PrinterIcon />Draft</ActionButton>
          <Divider />
          <ActionButton $w={56}><PrinterIcon />Print</ActionButton>
          <Divider />
          <ActionButton $w={64} disabled><GreyShape d={GREY_MAIL} />E-mail</ActionButton>
          <ActionButton $w={60} disabled><GreyShape d={GREY_REPLY} />Reply</ActionButton>
          <ActionButton $w={73} disabled><GreyShape d={GREY_FORWARD} />Forward</ActionButton>
          <Divider />
          <ActionButton $w={64} disabled><GreyShape d={GREY_CLIP} />Attach</ActionButton>
          <Divider />
          <ActionButton $w={58} disabled><GreyShape d={GREY_SEND} />Send</ActionButton>
          <Divider />
          <ActionButton $w={58}><CopyIcon />Copy</ActionButton>
          <Divider />
          <ActionButton $w={54}><PeopleIcon />Sign</ActionButton>
          <ActionButton $w={54}><DoctorIcon />Sign</ActionButton>
          <ActionButton $w={26} disabled aria-label="Clear"><TornadoIcon /></ActionButton>
        </ActionBar>

        <Ribbon>
          <Group w={80} title="Clipboard">
            <ClipboardGrid>
              <PlainButton aria-label="Paste"><PasteIcon /></PlainButton>
              <PlainButton aria-label="Cut" disabled><CutIcon /></PlainButton>
              <PlainButton aria-label="Copy" disabled><GreyShape d="M0 0h7l2 2v2h3l3 3v8H6v-4H0Z" /></PlainButton>
            </ClipboardGrid>
          </Group>
          <Group w={228} title="Format">
            <Line $gap={4}>
              <Combo w={156} label="Font" value="Arial" />
              <Combo w={60} label="Font size" value="12" />
            </Line>
            <Line $gap={4}>
              <Segments>
                <RibbonButton aria-label="Bold"><Glyph>B</Glyph></RibbonButton>
                <RibbonButton aria-label="Italic"><Glyph $italic>I</Glyph></RibbonButton>
                <RibbonButton aria-label="Underline"><Glyph $light $line="underline">U</Glyph></RibbonButton>
                <RibbonButton aria-label="Strikethrough"><Glyph $light $line="line-through">S</Glyph></RibbonButton>
                <RibbonButton aria-label="Subscript"><Glyph>X<sub>2</sub></Glyph></RibbonButton>
                <RibbonButton aria-label="Superscript"><Glyph>x<sup>2</sup></Glyph></RibbonButton>
              </Segments>
              <Segments>
                <RibbonButton $w={36} aria-label="Font colour"><FontColorIcon /><Caret /></RibbonButton>
                <RibbonButton $w={36} aria-label="Highlight"><HighlightIcon /><Caret /></RibbonButton>
              </Segments>
            </Line>
          </Group>
          <Group w={104} title="Paragraph" launch>
            <Line>
              <Segments>
                <RibbonButton aria-label="Numbered list"><ListIcon numbered /></RibbonButton>
                <RibbonButton aria-label="Bulleted list"><ListIcon /></RibbonButton>
                <RibbonButton aria-label="Outline list"><ListIcon /></RibbonButton>
              </Segments>
              <RibbonButton aria-label="Show marks"><PilcrowIcon /></RibbonButton>
            </Line>
            <Line>
              <Segments>
                <RibbonButton $on aria-label="Align left"><AlignIcon kind="left" /></RibbonButton>
                <RibbonButton aria-label="Align centre"><AlignIcon kind="center" /></RibbonButton>
                <RibbonButton aria-label="Align right"><AlignIcon kind="right" /></RibbonButton>
                <RibbonButton aria-label="Justify"><AlignIcon kind="full" /></RibbonButton>
              </Segments>
            </Line>
          </Group>
          <Group w={56} title="Spelling">
            <Centered>
              <PlainButton aria-label="Check spelling"><SpellIcon /></PlainButton>
            </Centered>
          </Group>
          <Group w={56} title="Editing">
            <Line>
              <RibbonButton disabled aria-label="Undo"><ArrowBack /></RibbonButton>
              <RibbonButton disabled aria-label="Redo"><ArrowBack flip /></RibbonButton>
            </Line>
            <Line>
              <RibbonButton aria-label="Find"><BinocularsIcon /></RibbonButton>
              <RibbonButton aria-label="Replace"><ReplaceIcon /></RibbonButton>
            </Line>
          </Group>
          <Group w={104} title="Insert">
            <Line>
              <RibbonButton aria-label="Text box"><TextBoxIcon /></RibbonButton>
              <RibbonButton aria-label="Picture"><PictureIcon /></RibbonButton>
              <RibbonButton aria-label="File"><InsertFileIcon /></RibbonButton>
              <RibbonButton aria-label="Hyperlink"><GlobeLinkIcon /></RibbonButton>
            </Line>
            <RibbonButton $w={96}>
              <NavLabel><DatabaseIcon />Merge</NavLabel>
              <DropZone><Caret /></DropZone>
            </RibbonButton>
          </Group>
          <Group w={56} title="Page" launch>
            <Line>
              <RibbonButton aria-label="Page break"><PageBreakIcon /></RibbonButton>
              <RibbonButton aria-label="Section break"><PageBreakIcon dotted /></RibbonButton>
            </Line>
            <Line>
              <RibbonButton aria-label="Background"><LandscapeIcon /></RibbonButton>
              <RibbonButton disabled aria-label="Page setup"><GreyShape d="M0 0h10l4 4v11H0Z" /></RibbonButton>
            </Line>
          </Group>
          <Group w={92} title="Table">
            <Line>
              <RibbonButton aria-label="Insert table"><TableIcon /></RibbonButton>
              <RibbonButton $w={36} disabled aria-label="Table options"><GreyShape d="M0 0h15v15H0Z" /><Caret grey /></RibbonButton>
            </Line>
          </Group>
          <Group w={104} title="Header &amp; Footer">
            <Line>
              <RibbonButton $w={36} aria-label="Header and footer"><HeaderIcon /><Caret /></RibbonButton>
            </Line>
          </Group>
          <Group w={64} title="Zoom">
            <Line><Combo w={56} label="Zoom" value="100%" /></Line>
          </Group>
        </Ribbon>

        <TabStrip>
          <DocTab>General\imail - Incomplete Treatment</DocTab>
        </TabStrip>

        <Editor>
          <SubjectRow>
            <label htmlFor="subject">Subject:</label>
            <SubjectInput id="subject" defaultValue="imail - Incomplete Treatment" />
          </SubjectRow>
          <RulerRow>
            <TabStopSlot>
              <TabStopButton aria-label="Tab type">
                <svg width="6" height="6" viewBox="0 0 6 6" aria-hidden="true"><path d="M1 0v5h5" fill="none" stroke="#000" strokeWidth="2" /></svg>
              </TabStopButton>
            </TabStopSlot>
            <Ruler />
          </RulerRow>
          <Canvas>
            <Sheet>
              <TextCaret />
              <Letterhead>
                <ToothMark size={54} />
                <LogoText>
                  <LogoWord $color="#abd032">Systems</LogoWord> <LogoWord $color="#38b1da">for Dentists</LogoWord>
                </LogoText>
              </Letterhead>
              <Address>
                <div>T Test</div>
                <div>Systems For Dentists Ltd</div>
                <div>The Grainger Suite</div>
                <div>Dobson House</div>
                <div>Regent Centre</div>
                <div>Gosforth</div>
                <div>Newcastle Upon Tyne</div>
              </Address>
              <p>Dear Master Test,</p>
              <p>We have noticed from our records that you have treatment that is incomplete.</p>
              <p>If you wish to continue with your treatment please contact us within 7 days to arrange an appointment(s).</p>
              <p>
                If you wish to rebook your appointments please call us on <b>0845 643 2727</b> at your earliest convenience.
              </p>
              <SignOff>Yours sincerley,</SignOff>
            </Sheet>
            <SheetShadow />
          </Canvas>
        </Editor>
      </Window>
    </>
  );
}
